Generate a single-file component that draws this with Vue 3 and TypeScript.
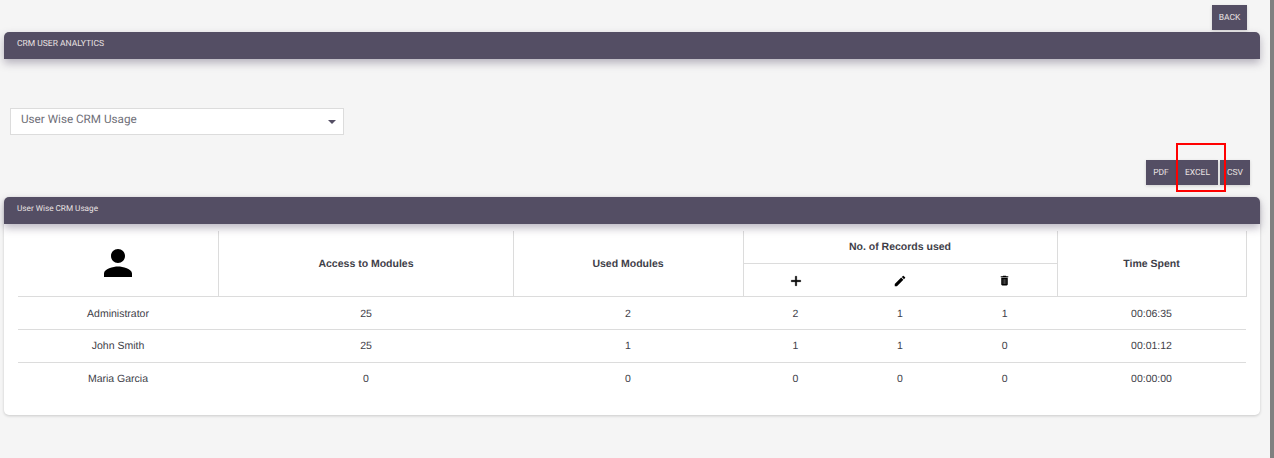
<script setup lang="ts">
interface Row {
  name: string
  access: number
  used: number
  added: number
  edited: number
  deleted: number
  time: string
}

const rows: Row[] = [
  { name: 'Administrator', access: 25, used: 2, added: 2, edited: 1, deleted: 1, time: '00:06:35' },
  { name: 'John Smith', access: 25, used: 1, added: 1, edited: 1, deleted: 0, time: '00:01:12' },
  { name: 'Maria Garcia', access: 0, used: 0, added: 0, edited: 0, deleted: 0, time: '00:00:00' },
]
</script>

<template>
  <div class="screen">
    <main class="page">
      <div class="back-row">
        <button class="btn back" type="button">BACK</button>
      </div>
      <header class="bar title-bar">CRM USER ANALYTICS</header>

      <div class="select-wrap">
        <div class="select">
          <span>User Wise CRM Usage</span>
          <i class="caret"></i>
        </div>
      </div>

      <div class="export-row">
        <button class="btn pdf" type="button">PDF</button>
        <button class="btn excel" type="button">EXCEL<span class="highlight"></span></button>
        <button class="btn csv" type="button">CSV</button>
      </div>

      <section class="card">
        <header class="bar card-bar">User Wise CRM Usage</header>
        <div class="table-wrap">
          <table>
            <colgroup>
              <col class="c-user" />
              <col class="c-access" />
              <col class="c-used" />
              <col class="c-rec" />
              <col class="c-rec" />
              <col class="c-rec" />
              <col class="c-time" />
            </colgroup>
            <thead>
              <tr class="head-1">
                <th rowspan="2" class="no-left">
                  <svg class="user-icon" viewBox="0 0 24 24" width="42" height="42" aria-hidden="true">
                    <path d="M12 12c2.21 0 4-1.79 4-4s-1.79-4-4-4-4 1.79-4 4 1.79 4 4 4zm0 2c-2.67 0-8 1.34-8 4v2h16v-2c0-2.66-5.33-4-8-4z" />
                  </svg>
                </th>
                <th rowspan="2" class="tall col-access">Access to Modules</th>
                <th rowspan="2" class="tall">Used Modules</th>
                <th colspan="3" class="group">No. of Records used</th>
                <th rowspan="2" class="tall last">Time Spent</th>
              </tr>
              <tr class="head-2">
                <th class="plain-left">
                  <svg viewBox="0 0 24 24" width="16" height="16" aria-hidden="true">
                    <path d="M19 13h-6v6h-2v-6H5v-2h6V5h2v6h6v2z" stroke="#000" stroke-width="0.8" />
                  </svg>
                </th>
                <th class="plain">
                  <svg viewBox="0 0 24 24" width="14" height="14" aria-hidden="true">
                    <path d="M3 17.25V21h3.75L17.81 9.94l-3.75-3.75L3 17.25zM20.71 7.04a1 1 0 0 0 0-1.41l-2.34-2.34a1 1 0 0 0-1.41 0l-1.83 1.83 3.75 3.75 1.83-1.83z" />
                  </svg>
                </th>
                <th class="plain">
                  <svg viewBox="0 0 24 24" width="13" height="13" aria-hidden="true">
                    <path d="M6 19c0 1.1.9 2 2 2h8c1.1 0 2-.9 2-2V7H6v12zM19 4h-3.5l-1-1h-5l-1 1H5v2h14V4z" />
                    <path d="M9.5 9.5v9M12 9.5v9M14.5 9.5v9" stroke="#fff" stroke-width="0.9" opacity="0.55" fill="none" />
                  </svg>
                </th>
              </tr>
            </thead>
            <tbody>
              <tr v-for="(row, index) in rows" :key="row.name" :class="`row-${index + 1}`">
                <td>{{ row.name }}</td>
                <td class="col-access">{{ row.access }}</td>
                <td>{{ row.used }}</td>
                <td>{{ row.added }}</td>
                <td>{{ row.edited }}</td>
                <td>{{ row.deleted }}</td>
                <td>{{ row.time }}</td>
              </tr>
            </tbody>
          </table>
        </div>
      </section>
    </main>
    <div class="edge"></div>
  </div>
</template>

<style>
html,
body {
  margin: 0;
  background: #f5f5f5;
}
</style>

<style scoped>
.screen {
  display: flex;
  width: 1274px;
  height: 458px;
  overflow: hidden;
  background: #f5f5f5;
  font-family: "Liberation Sans", Arial, sans-serif;
  text-rendering: geometricPrecision;
}
.page {
  flex: 1;
  min-width: 0;
}
.edge {
  flex: 0 0 4px;
  background: #808080;
}
.btn {
  display: block;
  box-sizing: border-box;
  height: 25px;
  padding: 0;
  border: 0;
  background: #544e64;
  color: #e9e2e2;
  font-family: Roboto, sans-serif;
  font-size: 8.5px;
  text-rendering: geometricPrecision;
  text-align: center;
  box-shadow: 0 1px 3px rgba(0, 0, 0, 0.15);
}
.back-row {
  display: flex;
  justify-content: flex-end;
  padding: 5px 23px 0 0;
  height: 27px;
}
.back {
  width: 35px;
}
.bar {
  box-sizing: border-box;
  height: 27px;
  background: #544e64;
  color: #e9e2e2;
  font-family: Roboto, sans-serif;
  font-size: 8.5px;
  padding: 7px 0 0 13px;
  line-height: 11px;
  border-radius: 5px 5px 0 0;
  box-shadow: 0 4px 8px rgba(60, 50, 80, 0.35);
}
.title-bar {
  margin: 0 10px 0 4px;
}
.card-bar {
  font-size: 8.2px;
}
.select-wrap {
  padding: 49px 0 0 10px;
}
.select {
  box-sizing: border-box;
  position: relative;
  width: 334px;
  height: 27px;
  background: #fff;
  border: 1px solid #dcdcdc;
  color: #6f6f78;
  font-family: Roboto, sans-serif;
  font-size: 11.7px;
  line-height: 21px;
  padding-left: 10px;
}
.caret {
  position: absolute;
  right: 7px;
  top: 11px;
  width: 0;
  height: 0;
  border-left: 4px solid transparent;
  border-right: 4px solid transparent;
  border-top: 4px solid #544e64;
}
.export-row {
  display: flex;
  justify-content: flex-end;
  gap: 2px;
  padding: 25px 20px 0 0;
  height: 37px;
}
.pdf {
  width: 31px;
  margin-right: -2px;
  padding-right: 1px;
}
.excel {
  width: 41px;
  position: relative;
}
.csv {
  width: 30px;
}
.highlight {
  position: absolute;
  left: -1px;
  top: -17px;
  width: 50px;
  height: 49px;
  box-sizing: border-box;
  border: 2px solid #f00;
}
.card {
  margin: 0 10px 0 4px;
  height: 218px;
  background: #fff;
  border-radius: 5px;
  box-shadow: 0 1px 3px rgba(0, 0, 0, 0.18);
}
.card-bar {
  position: relative;
}
.table-wrap {
  padding: 7px 13px 0 14px;
}
table {
  width: 1228px;
  border-collapse: collapse;
  table-layout: fixed;
  font-size: 10.5px;
  color: #3e3e48;
}
.c-user { width: 200px; }
.c-access { width: 295px; }
.c-used { width: 230px; }
.c-rec { width: 104.67px; }
.c-time { width: 189px; }
th {
  font-weight: 700;
  border-left: 1px solid #dcdcdc;
  border-bottom: 1px solid #dcdcdc;
  padding: 0;
  text-align: center;
  vertical-align: middle;
}
th.tall { padding-top: 2px; }
th.no-left { border-left: 0; }
th.last { border-right: 1px solid #dcdcdc; }
th.plain { border-left: 0; }
.col-access { padding-left: 1px; }
.head-1 { height: 32px; }
.head-2 { height: 33px; }
.head-2 svg {
  display: block;
  margin: 2px auto 0;
}
.user-icon {
  display: block;
  margin: 0 auto;
}
td {
  box-sizing: border-box;
  height: 33px;
  padding: 0;
  text-align: center;
  vertical-align: middle;
  border-bottom: 1px solid #dcdcdc;
}
.row-1 td { padding-top: 2px; }
.row-3 td {
  border-bottom: 0;
}
</style>
